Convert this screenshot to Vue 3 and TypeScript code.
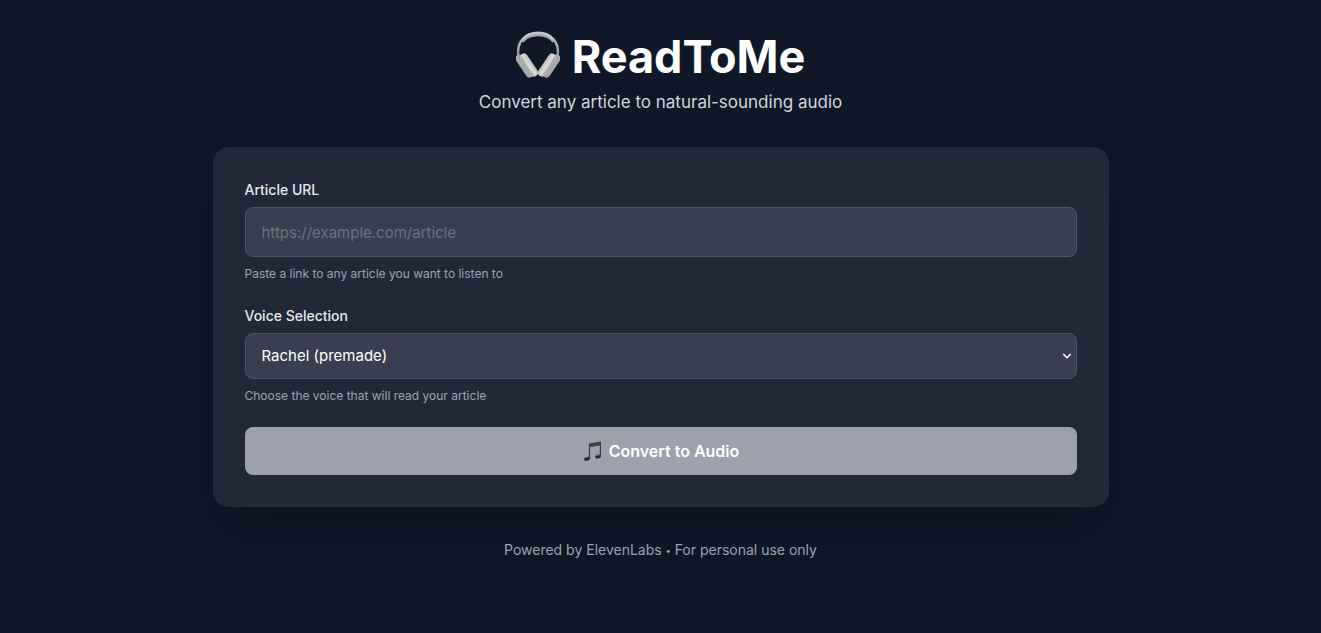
<script setup lang="ts">
import { computed, ref } from 'vue'

interface Voice {
  id: string
  name: string
  category: string
}

const voices: Voice[] = [{ id: 'rachel', name: 'Rachel', category: 'premade' }]
const articleUrl = ref('')
const selectedVoice = ref(voices[0].id)
const canConvert = computed(() => articleUrl.value.trim().length > 0)
</script>

<template>
  <div class="page">
    <header class="header">
      <h1 class="title">
        <svg class="headphones" viewBox="0 0 44 48" aria-hidden="true">
          <defs>
            <linearGradient id="band" x1="0" y1="0" x2="0" y2="1">
              <stop offset="0" stop-color="#c4c6ca" />
              <stop offset="1" stop-color="#8f939b" />
            </linearGradient>
            <linearGradient id="cup" x1="0" y1="0" x2="1" y2="0">
              <stop offset="0" stop-color="#b4b4b5" />
              <stop offset="0.5" stop-color="#dddcd9" />
              <stop offset="1" stop-color="#b8b8b7" />
            </linearGradient>
          </defs>
          <path d="M2.500 26C0 11 9 1.800 22 1.800S44 11 41.500 26" fill="none" stroke="url(#band)" stroke-width="2.500" />
          <path d="M6 10.500C13 1 31 1 38 10.500" fill="none" stroke="#a9abb0" stroke-width="3.500" />
          <path d="M7 8C14 0 30 0 37 8" fill="none" stroke="#d6d6d6" stroke-width="1.200" />
          <g id="left-cup">
            <rect x="4.500" y="22" width="8" height="26" rx="4" transform="rotate(-34 8.500 35)" fill="#a6a8ab" />
            <rect x="9" y="21" width="8" height="26" rx="4" transform="rotate(-34 13 34)" fill="url(#cup)" />
            <path d="M5.500 26Q7.500 33 16.500 43.500" fill="none" stroke="#8d8f93" stroke-width="0.800" />
          </g>
          <use href="#left-cup" transform="translate(44 0) scale(-1 1)" />
        </svg>
        <span>ReadToMe</span>
      </h1>
      <p class="subtitle">Convert any article to natural-sounding audio</p>
    </header>

    <main class="card">
      <form class="form" @submit.prevent>
        <div class="field">
          <label class="label" for="article-url">Article URL</label>
          <input
            id="article-url"
            v-model="articleUrl"
            class="control url"
            type="url"
            placeholder="https://example.com/article"
            aria-describedby="url-hint"
          />
          <p id="url-hint" class="hint">Paste a link to any article you want to listen to</p>
        </div>
        <div class="field">
          <label class="label" for="voice">Voice Selection</label>
          <div class="select-wrap">
            <select id="voice" v-model="selectedVoice" class="control voice" aria-describedby="voice-hint">
              <option v-for="voice in voices" :key="voice.id" :value="voice.id">
                {{ voice.name }} ({{ voice.category }})
              </option>
            </select>
            <svg class="chevron" viewBox="0 0 10 10" aria-hidden="true">
              <path d="M1.200 3L5 6.800l3.800-3.800" />
            </svg>
          </div>
          <p id="voice-hint" class="hint">Choose the voice that will read your article</p>
        </div>
        <button class="convert" type="submit" :disabled="!canConvert">
          <svg class="notes" viewBox="0 0 20 20" aria-hidden="true">
            <path d="M7 2.500L19 .5v3.800L7 6.300z" fill="#49413f" />
            <path d="M7.500 3v14M18.400 1.500v13.500" fill="none" stroke="#3a3b42" stroke-width="1.200" />
            <ellipse cx="5" cy="17.800" rx="3" ry="1.900" transform="rotate(-12 5 17.800)" fill="#24252d" />
            <ellipse cx="16" cy="15.600" rx="2.900" ry="1.900" transform="rotate(-12 16 15.600)" fill="#24252d" />
            <path d="M3.300 17.200q1.500-1 3-.6M14.500 15q1.500-1 3-.6" fill="none" stroke="#6d7079" stroke-width=".8" />
          </svg>
          <span>Convert to Audio</span>
        </button>
      </form>
    </main>

    <footer class="footer">Powered by ElevenLabs <span class="bullet">•</span> For personal use only</footer>
  </div>
</template>

<style>
body {
  margin: 0;
  background: #0f1729;
}
</style>

<style scoped>
.page {
  box-sizing: border-box;
  min-height: 100vh;
  max-width: 928px;
  margin: 0 auto;
  padding: 31px 16px;
  color: #fff;
  font-family: Inter, "Liberation Sans", sans-serif;
  font-size: 16px;
  line-height: 24px;
}

.header {
  margin-bottom: 31px;
  text-align: center;
}

.title {
  display: flex;
  justify-content: center;
  align-items: flex-start;
  gap: 12px;
  margin: 0 0 5px;
  font-size: 45px;
  line-height: 52px;
  font-weight: 700;
}

.headphones {
  width: 44px;
  height: 48px;
}

.subtitle {
  margin: 0;
  color: #d1d5db;
  font-size: 17px;
  line-height: 28px;
}

.card {
  padding: 32px;
  border-radius: 16px;
  background: #212939;
  box-shadow: 0 25px 50px -12px rgba(0, 0, 0, 0.25);
}

.form {
  display: grid;
  gap: 22px;
}

.label {
  display: block;
  margin-bottom: 6px;
  color: #e5e7eb;
  font-size: 14px;
  line-height: 22px;
  font-weight: 500;
}

.control {
  display: block;
  box-sizing: border-box;
  width: 100%;
  margin: 0;
  border: 1px solid #4b5563;
  border-radius: 8px;
  background: #393f50;
  color: #fff;
  font: inherit;
  font-size: 15px;
}

.url {
  height: 50px;
  padding: 12px 16px;
}

.url::placeholder {
  color: #6b7280;
  opacity: 1;
}

.select-wrap {
  position: relative;
}

.voice {
  height: 46px;
  padding: 0 32px 0 16px;
  appearance: none;
}

.chevron {
  position: absolute;
  top: 50%;
  right: 5px;
  width: 10px;
  height: 10px;
  transform: translateY(-50%);
  fill: none;
  stroke: #fff;
  stroke-width: 1.500;
  pointer-events: none;
}

.hint {
  margin: 8px 0 0;
  color: #9ca3af;
  font-size: 12px;
  line-height: 18px;
}

.convert {
  display: flex;
  justify-content: center;
  align-items: center;
  gap: 7px;
  width: 100%;
  height: 48px;
  padding: 0 24px;
  border: 0;
  border-radius: 8px;
  background: #9ca1ad;
  color: #fff;
  font: inherit;
  font-weight: 600;
  cursor: pointer;
}

.convert:disabled {
  cursor: not-allowed;
}

.notes {
  width: 20px;
  height: 20px;
}

.footer {
  margin-top: 33px;
  color: #9ca3af;
  font-size: 14px;
  line-height: 20px;
  text-align: center;
}

.bullet {
  font-size: 9px;
  vertical-align: 1px;
}
</style>
